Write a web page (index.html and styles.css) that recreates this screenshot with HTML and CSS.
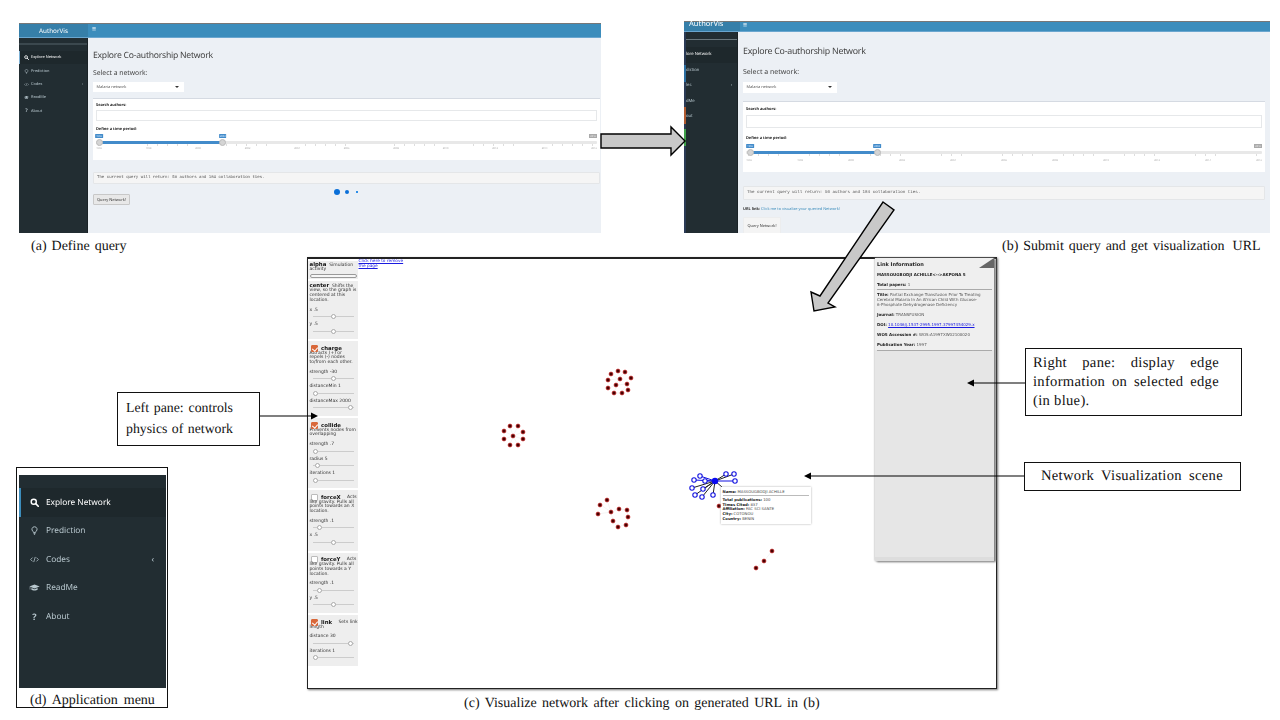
FILE: index.html
```html
<!DOCTYPE html>
<html lang="en">
<head>
<meta charset="utf-8">
<title>AuthorVis figure</title>
<link rel="stylesheet" href="styles.css">
</head>
<body>
<svg class="defs" width="0" height="0" aria-hidden="true">
  <symbol id="i-search" viewBox="0 0 12 12"><circle cx="5" cy="5" r="3.4" fill="none" stroke="currentColor" stroke-width="1.9"/><path d="M7.6 7.6 11 11" stroke="currentColor" stroke-width="2.2" stroke-linecap="round"/></symbol>
  <symbol id="i-bulb" viewBox="0 0 12 12"><path d="M6 1a3.4 3.4 0 0 0-2.2 6c.5.5.7 1 .8 1.6h2.8c.1-.6.3-1.100.8-1.600A3.400 3.400 0 0 0 6 1Z" fill="none" stroke="currentColor" stroke-width="1.2"/><path d="M4.700 10h2.600M5.200 11.300h1.600" stroke="currentColor" stroke-width="1"/></symbol>
  <symbol id="i-code" viewBox="0 0 14 12"><path d="M4 3 1 6l3 3M10 3l3 3-3 3M8.200 2 5.800 10" fill="none" stroke="currentColor" stroke-width="1.200"/></symbol>
  <symbol id="i-cap" viewBox="0 0 16 12"><path d="M8 1.500 0.500 4.500 8 7.500l7.500-3Z" fill="currentColor"/><path d="M3.500 6.800v2.400c1.500 1.500 7.500 1.500 9 0V6.800L8 8.600Z" fill="currentColor"/><path d="M1.500 5v4" stroke="currentColor" stroke-width=".8"/></symbol>
</svg>

<div class="canvas">

  <section class="shot shot-a">
    <header class="top">
      <div class="logo">AuthorVis</div>
      <div class="nav">≡</div>
    </header>
    <div class="body">
      <nav class="side">
        <div class="side-line"></div>
        <a class="item active"><svg class="ic"><use href="#i-search"/></svg><span>Explore Network</span></a>
        <a class="item"><svg class="ic"><use href="#i-bulb"/></svg><span>Prediction</span></a>
        <a class="item"><svg class="ic"><use href="#i-code"/></svg><span>Codes</span><i class="chev">‹</i></a>
        <a class="item"><svg class="ic"><use href="#i-cap"/></svg><span>ReadMe</span></a>
        <a class="item"><b class="ic q">?</b><span>About</span></a>
      </nav>
      <main class="main">
        <h1>Explore Co-authorship Network</h1>
        <h2>Select a network:</h2>
        <div class="select"><span>Malaria network</span><i class="caret"></i></div>
        <div class="box">
          <label>Search authors:</label>
          <div class="input"></div>
          <label class="lab2">Define a time period:</label>
          <div class="slider">
            <div class="track"><div class="fill" style="left:.6%;width:24.7%"></div></div>
            <div class="thumb" style="left:.6%"><em>1996</em></div>
            <div class="thumb" style="left:25.3%"><em>2003</em></div>
            <em class="maxtag">2016</em>
            <div class="ticks"></div>
            <div class="years"><span>1996</span><span>1998</span><span>2000</span><span>2002</span><span>2004</span><span>2006</span><span>2008</span><span>2010</span><span>2012</span><span>2014</span><span>2016</span></div>
          </div>
        </div>
        <pre class="output">The current query will return: 50 authors and 184 collaboration ties.</pre>
        <button class="btn">Query Network!</button>
        <div class="dots"><i></i><i></i><i></i></div>
      </main>
    </div>
  </section>
  <p class="cap cap-a">(a) Define query</p>

  <section class="shot shot-b">
    <header class="top">
      <div class="logo">AuthorVis</div>
      <div class="nav">≡</div>
    </header>
    <div class="body">
      <div class="strip"></div>
      <nav class="side">
        <div class="side-line"></div>
        <a class="item active"><span>lore Network</span></a>
        <a class="item"><span>diction</span></a>
        <a class="item"><span>les</span><i class="chev">‹</i></a>
        <a class="item"><span>dMe</span></a>
        <a class="item"><span>out</span></a>
      </nav>
      <main class="main">
        <h1>Explore Co-authorship Network</h1>
        <h2>Select a network:</h2>
        <div class="select"><span>Malaria network</span><i class="caret"></i></div>
        <div class="box">
          <label>Search authors:</label>
          <div class="input"></div>
          <label class="lab2">Define a time period:</label>
          <div class="slider">
            <div class="track"><div class="fill" style="left:.8%;width:24.6%"></div></div>
            <div class="thumb" style="left:.8%"><em>1996</em></div>
            <div class="thumb" style="left:25.4%"><em>2003</em></div>
            <em class="maxtag">2016</em>
            <div class="ticks"></div>
            <div class="years"><span>1996</span><span>1998</span><span>2000</span><span>2002</span><span>2004</span><span>2006</span><span>2008</span><span>2010</span><span>2012</span><span>2014</span><span>2016</span></div>
          </div>
        </div>
        <pre class="output">The current query will return: 50 authors and 184 collaboration ties.</pre>
        <p class="url"><b>URL link:</b> <a>Click me to visualize your queried Network!</a></p>
        <button class="btn">Query Network!</button>
      </main>
    </div>
  </section>
  <p class="cap cap-b">(b) Submit query and get visualization <span class="gap">URL</span></p>

  <section class="scene">
    <aside class="controls">
      <div class="ctl ctl-alpha">
        <p><b>alpha</b>&nbsp; Simulation<br>activity</p>
        <div class="alpha-bar"></div>
      </div>
      <div class="ctl ctl-center">
        <p><b>center</b>&nbsp; Shifts the<br>view, so the graph is<br>centered at this<br>location.</p>
        <div class="row"><span>x .5</span><div class="range"><i style="left:50%"></i></div></div>
        <div class="row"><span>y .5</span><div class="range"><i style="left:50%"></i></div></div>
      </div>
      <div class="ctl ctl-charge">
        <div class="head"><i class="check on"></i><b>charge</b></div>
        <p>Attracts (+) or<br>repels (-) nodes<br>to/from each other.</p>
        <div class="row"><span>strength -30</span><div class="range"><i style="left:50%"></i></div></div>
        <div class="row"><span>distanceMin 1</span><div class="range"><i style="left:8%"></i></div></div>
        <div class="row"><span>distanceMax 2000</span><div class="range"><i style="left:93%"></i></div></div>
      </div>
      <div class="ctl ctl-collide">
        <div class="head"><i class="check on"></i><b>collide</b></div>
        <p>Prevents nodes from<br>overlapping</p>
        <div class="row"><span>strength .7</span><div class="range"><i style="left:8%"></i></div></div>
        <div class="row"><span>radius 5</span><div class="range"><i style="left:12%"></i></div></div>
        <div class="row"><span>iterations 1</span><div class="range"><i style="left:8%"></i></div></div>
      </div>
      <div class="ctl ctl-force">
        <div class="head"><i class="check"></i><b>forceX</b><span>&nbsp; Acts</span></div>
        <p>like gravity. Pulls all<br>points towards an X<br>location.</p>
        <div class="row"><span>strength .1</span><div class="range"><i style="left:16%"></i></div></div>
        <div class="row"><span>x .5</span><div class="range"><i style="left:50%"></i></div></div>
      </div>
      <div class="ctl ctl-force">
        <div class="head"><i class="check"></i><b>forceY</b><span>&nbsp; Acts</span></div>
        <p>like gravity. Pulls all<br>points towards a Y<br>location.</p>
        <div class="row"><span>strength .1</span><div class="range"><i style="left:16%"></i></div></div>
        <div class="row"><span>y .5</span><div class="range"><i style="left:50%"></i></div></div>
      </div>
      <div class="ctl ctl-link">
        <div class="head"><i class="check on"></i><b>link</b><span>&nbsp; Sets link</span></div>
        <p>length</p>
        <div class="row"><span>distance 30</span><div class="range"><i style="left:93%"></i></div></div>
        <div class="row"><span>iterations 1</span><div class="range"><i style="left:8%"></i></div></div>
      </div>
    </aside>
    <a class="remove">Click here to remove<br>the page</a>

    <svg class="graph" viewBox="307 257 690 432" width="690" height="432">
      <g class="links">
        <path d="M618 379 617 385 M618 379 611 374 M618 379 625 372 M618 379 608 380 M617 385 627 384 M617 385 608 388 M617 385 614 393 M627 384 621 393 M627 384 628 390 M611 374 618 371 M614 393 621 393"/>
        <path d="M513 436 510 426 M513 436 518 426 M513 436 504 431 M513 436 523 432 M513 436 504 439 M513 436 523 439 M513 436 510 445 M513 436 518 445"/>
        <path d="M607 500 611 512 M601 505 611 512 M598 514 611 512 M611 512 619 509 M619 509 627 510 M627 510 628 517 M628 517 626 524 M626 524 618 527 M618 527 613 521 M613 521 611 512"/>
        <path d="M772 551 764 561 756 568"/>
      </g>
      <g class="nodes">
        <circle cx="618" cy="371"/><circle cx="611" cy="374"/><circle cx="625" cy="372"/><circle cx="631" cy="378"/><circle cx="608" cy="380"/><circle cx="620" cy="379"/><circle cx="627" cy="384"/><circle cx="616" cy="385"/><circle cx="608" cy="388"/><circle cx="628" cy="390"/><circle cx="614" cy="393"/><circle cx="622" cy="393"/>
        <circle cx="510" cy="426"/><circle cx="518" cy="426"/><circle cx="504" cy="431"/><circle cx="523" cy="432"/><circle cx="513" cy="436"/><circle cx="504" cy="439"/><circle cx="523" cy="439"/><circle cx="510" cy="445"/><circle cx="518" cy="445"/>
        <circle cx="607" cy="500"/><circle cx="600" cy="505"/><circle cx="598" cy="514"/><circle cx="611" cy="512"/><circle cx="619" cy="509"/><circle cx="627" cy="510"/><circle cx="628" cy="517"/><circle cx="613" cy="521"/><circle cx="626" cy="525"/><circle cx="618" cy="527"/>
        <circle cx="772" cy="551"/><circle cx="764" cy="561"/><circle cx="756" cy="568"/>
        <circle cx="719" cy="506"/>
      </g>
      <g class="blue-links">
        <path d="M715 481 735 481 M715 481 700 476 M715 481 694 480 M715 481 705 481"/>
      </g>
      <g class="black-links">
        <path d="M715 481 726 474 M715 481 734 474 M715 481 692 488 M715 481 703 489 M715 481 695 495 M715 481 702 497 M715 481 713 495 M715 481 722 487"/>
      </g>
      <g class="blue-nodes">
        <circle cx="726" cy="474"/><circle cx="734" cy="474"/><circle cx="735" cy="481"/><circle cx="700" cy="476"/><circle cx="694" cy="480"/><circle cx="705" cy="481"/><circle cx="692" cy="488"/><circle cx="703" cy="489"/><circle cx="695" cy="495"/><circle cx="702" cy="497"/><circle cx="713" cy="495"/>
      </g>
      <circle class="blue-hub" cx="715" cy="481" r="3.200"/>
    </svg>

    <div class="tip">
      <p class="tip-name"><b>Name:</b> MASSOUGBODJI ACHILLE</p>
      <hr>
      <p><b>Total publications:</b> 100</p>
      <p><b>Times Cited:</b> 837</p>
      <p><b>Affiliation:</b> FAC SCI SANTE</p>
      <p><b>City:</b> COTONOU</p>
      <p><b>Country:</b> BENIN</p>
    </div>

    <aside class="info">
      <i class="corner"></i>
      <h3>Link Information</h3>
      <p class="who"><b>MASSOUGBODJI ACHILLE&lt;--&gt;AKPONA S</b></p>
      <p class="gap-t"><b>Total papers:</b> 1</p>
      <hr>
      <p><b>Title:</b> Partial Exchange Transfusion Prior To Treating<br>Cerebral Malaria In An African Child With Glucose-<br>6-Phosphate Dehydrogenase Deficiency</p>
      <p class="gap-j"><b>Journal:</b> TRANSFUSION</p>
      <p class="gap-j"><b>DOI:</b> <a>10.1046/j.1537-2995.1997.37997454029.x</a></p>
      <p class="gap-j"><b>WOS Accession #:</b> WOS:A1997XW02100020</p>
      <p class="gap-j"><b>Publication Year:</b> 1997</p>
      <hr class="hr-end">
      <div class="info-foot"></div>
    </aside>
  </section>
  <p class="cap cap-c">(c) Visualize network after clicking on generated URL in (b)</p>

  <section class="menu">
    <div class="menu-panel">
      <a class="mitem active"><svg class="mic"><use href="#i-search"/></svg><span>Explore Network</span></a>
      <a class="mitem"><svg class="mic"><use href="#i-bulb"/></svg><span>Prediction</span></a>
      <a class="mitem"><svg class="mic"><use href="#i-code"/></svg><span>Codes</span><i class="chev">‹</i></a>
      <a class="mitem"><svg class="mic"><use href="#i-cap"/></svg><span>ReadMe</span></a>
      <a class="mitem"><b class="mic q">?</b><span>About</span></a>
    </div>
    <p class="menu-cap">(d) Application menu</p>
  </section>

  <div class="note note-left"><div class="just">Left pane: controls</div><div class="just">physics of network</div></div>
  <div class="note note-right"><div class="just">Right pane: display edge</div><div class="just">information on selected edge</div><div>(in blue).</div></div>
  <div class="note note-scene"><div class="just">Network Visualization scene</div></div>

  <svg class="overlay" viewBox="0 0 1280 720" width="1280" height="720">
    <path class="block" d="M601 134H671V127L685 141 671 155V148H601Z"/>
    <path class="block" d="M883 202 894 210 828 303 835 307 814 311 811 292 820 296Z"/>
    <path class="line" d="M260 416H312"/><path class="arrowhead" d="M318 416 311 412.500V419.500Z"/>
    <path class="line" d="M1025 383H973"/><path class="arrowhead" d="M967 383 974 379.500V386.500Z"/>
    <path class="line" d="M1024 476H810"/><path class="arrowhead" d="M804 476 811 472.500V479.500Z"/>
  </svg>
</div>
</body>
</html>
```
FILE: styles.css
```css
*{box-sizing:border-box}
html,body{margin:0;padding:0;background:#fff}
body{width:1280px;height:720px;overflow:hidden;font-family:"Noto Sans","Open Sans",sans-serif;text-rendering:geometricPrecision}
p,h1,h2,h3,pre{margin:0}
.defs{position:absolute}
.canvas{position:relative;width:1280px;height:720px;overflow:hidden}

/* figure parts sit on a free canvas */
.shot,.scene,.menu,.note,.cap,.overlay{position:absolute}

/* app screenshots */
.shot{display:flex;flex-direction:column;overflow:hidden;background:#ecf0f5;filter:blur(.35px)}
.shot-a{left:19px;top:23px;width:582px;height:210px;--side:69px;--top:15px}
.shot-b{left:684px;top:21px;width:586px;height:212px;--side:54px;--top:11px}
.top{display:flex;height:var(--top);flex:none;border-top:1px solid #777;border-bottom:1px solid #6aa6cf}
.logo{width:var(--side);background:#367fa9;color:#fff;text-align:center;font-size:6.3px;line-height:13px;flex:none}
.nav{flex:1;background:#3c8dbc;color:#fff;font-size:7px;line-height:12px;padding-left:4px}
.shot-b .logo{font-size:7.500px;line-height:5px;text-align:left;padding-left:5px;width:56px}
.shot-b .nav{line-height:8px;padding-left:3px}
.body{flex:1;display:flex;min-height:0}
.strip{width:2px;flex:none;background:linear-gradient(#2a3a55 0,#2a3a55 33px,#2a6da0 33px,#2a6da0 50px,#2a3a55 50px,#2a3a55 75px,#b05a30 75px,#b05a30 92px,#2a3a55 92px,#2a3a55 97px,#3fa14a 97px,#3fa14a 114px,#2a3a55 114px)}
.side{width:var(--side);flex:none;background:#222d32;border-right:1px solid #1a2226;color:#b8c7ce;font-size:3.900px}
.shot-b .side{width:52px;font-size:4.200px}
.side-line{height:2px;background:#3b484e;margin-top:5px;margin-bottom:6px}
.shot-b .side-line{height:1px;margin-top:7px;margin-bottom:7px;background:#6a777d}
.item{display:flex;align-items:center;height:13.400px;padding-left:5px;gap:2px;position:relative}
.item.active{background:#1e282c;color:#fff;border-left:1px solid #7fb2d6;padding-left:4px}
.item .ic{width:5px;height:5px;flex:none;display:block;text-align:center;font-size:5px;line-height:5px}
.item .chev{position:absolute;right:4px;font-style:normal}
.shot-b .item{height:15.500px;padding-left:0}
.shot-b .item.active{border-left:0;padding-left:0}
.shot-b .item .chev{right:5px}
.main{flex:1;min-width:0;padding:0 1px 0 5px;position:relative;color:#444}
h1{font-weight:400;font-size:8.600px;letter-spacing:-.24px;line-height:10px;margin-top:12px;color:#444}
h2{font-weight:400;font-size:6.800px;line-height:10px;margin-top:8px;color:#444}
.select{width:91px;height:10px;background:#fff;margin-top:4px;display:flex;align-items:center;justify-content:space-between;padding:0 5px 0 3.500px;font-size:3.900px;color:#555}
.caret{border:2px solid transparent;border-top:2px solid #333;border-bottom:0;width:0;height:0}
.box{background:#fff;border-top:1.500px solid #d5dae2;margin-top:6px;height:62px;padding:3.500px 3px 0;font-size:3.900px;color:#222}
.box label{display:block;font-weight:700;line-height:5px}
.input{height:10.500px;border:1px solid #e6e8ea;margin-top:2.500px}
.box .lab2{margin-top:6px}
.slider{position:relative;margin-top:9.500px}
.track{height:2.500px;background:#e8e8e8;border-radius:1px;position:relative}
.fill{position:absolute;top:0;bottom:0;background:#428bca}
.thumb{position:absolute;top:-2.250px;width:7px;height:7px;margin-left:-3.500px;border-radius:50%;background:#d4d4d4;border:1px solid #bbb}
.thumb em{position:absolute;left:50%;transform:translateX(-50%);bottom:7px;background:#428bca;color:#dfefff;padding:0 1px;font-style:normal;font-size:2.500px;line-height:4px;border-radius:.5px}
.maxtag{position:absolute;right:0;top:-7.500px;background:#aaa;color:#eee;font-style:normal;font-size:2.500px;line-height:4px;padding:0 1px}
.ticks{height:2.500px;margin:0 2px;background:repeating-linear-gradient(90deg,#ddd 0,#ddd .6px,transparent .6px,transparent 9.880px)}
.years{display:flex;justify-content:space-between;margin:0 3px;font-size:2.500px;color:#aaa;line-height:4px}
.years span{width:0;display:flex;justify-content:center}
.output{height:12px;margin-top:12px;background:#f5f5f5;border:1px solid #e4e6e8;border-radius:1px;font-family:"Liberation Mono",monospace;font-size:4.050px;line-height:10px;padding-left:3px;color:#555}
.btn{display:block;width:37px;height:11px;margin-top:10px;padding:0;border:1px solid #c8c8c8;background:#e8e8e8;border-radius:1px;font:3.900px "Noto Sans",sans-serif;color:#333}
.dots{position:absolute;left:246px;top:151px;display:flex;align-items:center;gap:4.500px}
.dots i{display:block;background:#0a6fd8;border-radius:50%;width:6px;height:6px}
.dots i:nth-child(2){width:4.500px;height:4.500px}
.dots i:nth-child(3){width:2px;height:2px;background:#2d8ee8;border-radius:0;margin-left:2px}

.shot-b .main{padding:0 5px 0 5px}
.shot-b h1{font-size:8.800px;letter-spacing:-.25px;margin-top:14px}
.shot-b h2{font-size:7px;margin-top:12px}
.shot-b .select{width:94px;height:11.500px;margin-top:3.500px}
.shot-b .box{margin-top:8px;height:71px;padding-top:5px}
.shot-b .input{height:12.500px;margin-top:3px}
.shot-b .box .lab2{margin-top:8px}
.shot-b .slider{margin-top:10.500px}
.shot-b .ticks{background:repeating-linear-gradient(90deg,#ddd 0,#ddd .6px,transparent .6px,transparent 10.160px)}
.shot-b .years{margin-top:2px}
.shot-b .output{height:14px;margin-top:14px;font-size:4.200px;line-height:13px}
.url{font-size:3.900px;line-height:6px;margin-top:7px;color:#333}
.url a{color:#3c8dbc}
.shot-b .btn{height:17px;width:38px;margin-top:4px;background:#f4f4f4;border-color:#ecedee}

/* captions and notes */
.cap{margin:0;font-family:"Liberation Serif",serif;font-size:14px;color:#111;line-height:14px;white-space:nowrap}
.cap-a{left:31px;top:238px;word-spacing:1.500px}
.cap-b{left:1002px;top:238px;word-spacing:1.500px}
.gap{margin-left:3px}
.cap-a,.cap-b{top:239.500px}
.cap-c{left:464px;top:696.500px;word-spacing:1.900px}
.note{border:1px solid #111;background:#fff;font-family:"Liberation Serif",serif;font-size:14.600px;letter-spacing:.3px;color:#111;line-height:19px}
.just{text-align:justify;text-align-last:justify}
.note-left{left:117px;top:392px;width:143px;height:54px;padding:4px 26px 0 8px;font-size:13.800px;letter-spacing:0;line-height:21px}
.note-right{left:1025px;top:348px;width:217px;height:68px;padding:5px 22px 0 7px}
.note-scene{left:1024px;top:462px;width:217px;height:29px;padding:4px 17px 0 16px}
.overlay{left:0;top:0;pointer-events:none}
.block{fill:#c8c8c8;stroke:#000;stroke-width:1.400}
.line{stroke:#000;stroke-width:1.200;fill:none}
.arrowhead{fill:#000}

/* network window */
.scene{left:307px;top:257px;width:690px;height:432px;background:#fff;border:1.500px solid #222;border-top-width:2px;box-shadow:1px 1px 2px #777;font-family:"DejaVu Sans",sans-serif;font-size:4.500px;color:#333}
.controls{position:absolute;left:0;top:2px;width:50px;display:flex;flex-direction:column;gap:2px;filter:blur(.25px)}
.ctl{background:#eee;padding:2.500px 1.500px 5px;line-height:4.800px}
.ctl b{font-size:5.400px;color:#111}
.ctl-alpha{height:18px;padding-top:1.500px}
.ctl-center{height:58px}
.ctl-charge{height:75px}
.ctl-collide{height:70px}
.ctl-force{height:60.500px}
.ctl-link{height:51px}
.alpha-bar{height:4px;margin:.5px 0 0 .5px;border:.6px solid #999;border-radius:2px;background:#f6f6f6}
.row{margin-top:3.500px;white-space:nowrap}
.ctl p + .row{margin-top:5px}
.row span{display:block;height:5px}
.range{position:relative;height:6px;margin:0 3px;background:linear-gradient(#ccc,#ccc) center/100% 1px no-repeat}
.range i{position:absolute;top:.5px;width:5px;height:5px;margin-left:-2.500px;border-radius:50%;background:#fff;border:.6px solid #aaa}
.head{display:flex;align-items:flex-end;gap:3.500px;height:8px;white-space:nowrap}
.head span{flex:none}
.check{width:7px;height:7px;flex:none;margin-left:1px;border:.7px solid #bbb;border-radius:1px;background:#fff}
.check.on{background:#d9683a;border-color:#d9683a;position:relative}
.check.on::after{content:"";position:absolute;left:1.400px;top:.600px;width:2.600px;height:4px;border:solid #fff;border-width:0 1px 1px 0;transform:rotate(40deg)}
.remove{position:absolute;left:50.500px;top:-.5px;font-size:4.300px;line-height:5px;color:#1a1ae0;text-decoration:underline;white-space:nowrap;filter:blur(.25px)}
.graph{position:absolute;left:-1.500px;top:-2px}
.links path{fill:none;stroke:#eee;stroke-width:.6}
.nodes circle{r:2px;fill:#4a0000;stroke:#e03030;stroke-width:.6}
.blue-links path{stroke:#1010e0;stroke-width:1;fill:none}
.black-links path{stroke:#222;stroke-width:1;fill:none}
.blue-nodes circle{r:2.200px;fill:#fff;stroke:#1414e0;stroke-width:1.100}
.blue-hub{fill:#0a0af0}
.tip{position:absolute;left:412.500px;top:228px;width:90px;height:37px;background:#fff;box-shadow:0 0 2px #aaa;padding:2.500px 2px;font-size:3.800px;line-height:4.600px;color:#444}
.tip b{color:#222}
.tip hr{border:0;height:1.200px;background:#bbb;margin:1px 0 2px}
.info{position:absolute;left:567px;top:-1px;width:119px;height:303px;background:linear-gradient(#efefef 0,#efefef 92px,#e6e6e6 92px);box-shadow:0 0 2px #999,1.500px 1px 2px #777;padding:4px 2px 0;font-size:4px;line-height:5.100px;color:#555;display:flex;flex-direction:column;filter:blur(.2px)}
.info b{color:#222}
.corner{position:absolute;right:0;top:0;width:0;height:0;border-style:solid;border-width:0 0 10px 15px;border-color:transparent transparent #666 transparent}
.info h3{font-size:5px;line-height:6px;color:#222}
.who{margin-top:3.800px}
.gap-t{margin-top:4.800px}
.info hr{width:100%;border:0;height:1px;background:#aaa;margin:2.500px 0 2px}
.gap-j{margin-top:4.700px}
.info a{color:#1a1ae0;text-decoration:underline}
.info .hr-end{margin-top:3.500px}
.info-foot{margin:auto -2px 0;height:4px;background:#ddd}

/* application menu */
.menu{left:16px;top:467px;width:152px;height:241px;border:1px solid #111;background:#fff;padding:7px 1px 0 2px;display:flex;flex-direction:column}
.menu-panel{height:213px;flex:none;background:#222d32;padding-top:13px;color:#b8c7ce;font-size:8.300px;filter:blur(.25px)}
.mitem{display:flex;align-items:center;height:28.500px;padding-left:11px;gap:7px;position:relative}
.mitem.active{background:#1e282c;color:#fff;border-left:2px solid #3c8dbc;padding-left:9px}
.mic{width:9px;height:9px;flex:none;display:block;text-align:center;line-height:9px;font-size:9px}
.mitem:nth-child(4) .mic{width:11px;margin-left:-1px;margin-right:-1px}
.mitem .chev{position:absolute;right:12px;font-style:normal}
.menu-cap{font-family:"Liberation Serif",serif;font-size:14px;line-height:16px;text-align:center;color:#111;word-spacing:2.500px;margin-top:5px}
```
